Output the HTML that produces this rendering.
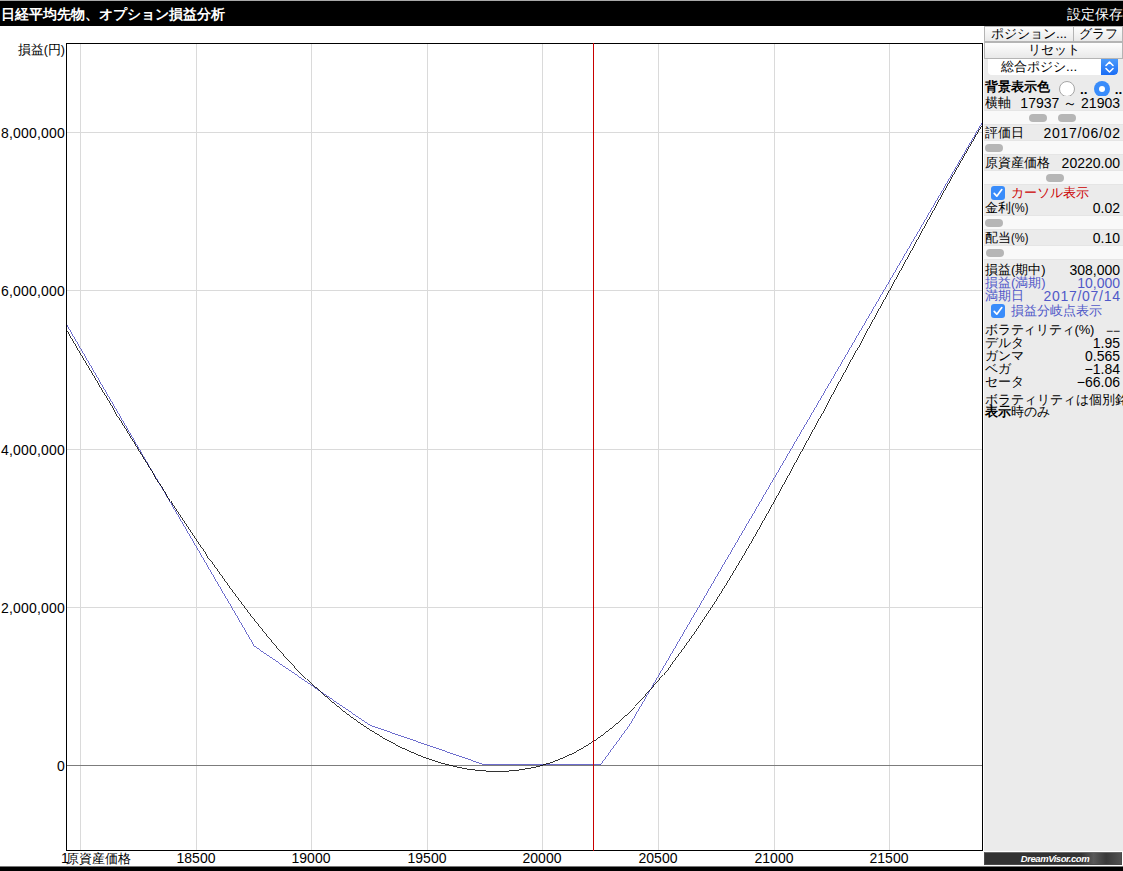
<!DOCTYPE html>
<html><head><meta charset="utf-8"><title>日経平均先物、オプション損益分析</title>
<style>
html,body{margin:0;padding:0;}
body{width:1123px;height:871px;overflow:hidden;background:#fff;position:relative;font-family:"Liberation Sans",sans-serif;color:#000;}
div,span{box-sizing:border-box;}
.abs{position:absolute;}
#topline{left:0;top:0;width:1123px;height:1px;background:#a9a9a9;}
#topbar{left:0;top:1px;width:1123px;height:25px;background:#000;}
#title{left:1px;top:6px;font-family:"Liberation Serif",serif;font-weight:bold;font-size:14px;line-height:18px;color:#fff;white-space:nowrap;}
#save{left:1067px;top:5px;font-size:14px;line-height:18px;color:#fff;white-space:nowrap;}
#botbar{left:0;top:867px;width:1123px;height:4px;background:#000;}
#plot{left:66px;top:43px;width:917px;height:808px;border:1px solid #000;}
.vg{position:absolute;top:44px;width:1px;height:806px;background:#dadada;}
.hg{position:absolute;left:67px;width:915px;height:1px;background:#dadada;}
#zero{left:67px;top:765px;width:915px;height:1px;background:#7c7c7c;}
#cursor{left:593px;top:43px;width:1px;height:808px;background:#c80000;}
.yl{position:absolute;right:1058px;font-size:14px;line-height:16px;white-space:nowrap;text-align:right;}
.xl{position:absolute;top:850px;width:60px;text-align:center;font-size:14px;line-height:16px;white-space:nowrap;}
#panel{left:984px;top:26px;width:139px;height:825px;background:#ebebeb;}
.row{position:absolute;left:984px;width:139px;font-size:14px;line-height:14px;white-space:nowrap;}
.row .l{position:absolute;left:1px;top:0;font-size:13px;}
.row .r{position:absolute;right:3px;top:0;}
.ds{letter-spacing:0.72px;margin-right:-0.72px;}
.band{position:absolute;left:984px;width:139px;background:#f9f9f9;border-top:1px solid #e5e5e5;border-bottom:1px solid #e5e5e5;}
.pill{position:absolute;width:18px;height:8px;border-radius:4px;background:#b6b6b6;}
.btn{position:absolute;height:16px;border:1px solid #b4b4b4;background:linear-gradient(#fdfdfd,#e9e9e9);font-size:13.3px;line-height:14px;text-align:center;white-space:nowrap;overflow:hidden;}
.blue{color:#5058c8;}
.cb{position:absolute;width:14px;height:14px;border-radius:3px;background:#398cfa;}
</style></head><body>

<div class="abs" id="topline"></div><div class="abs" id="topbar"></div>
<div class="abs" id="title">日経平均先物、オプション損益分析</div>
<div class="abs" id="save">設定保存</div>
<div class="abs" id="plot"></div>
<div class="vg" style="left:80px"></div>
<div class="vg" style="left:196px"></div>
<div class="vg" style="left:311px"></div>
<div class="vg" style="left:427px"></div>
<div class="vg" style="left:542px"></div>
<div class="vg" style="left:658px"></div>
<div class="vg" style="left:774px"></div>
<div class="vg" style="left:889px"></div>
<div class="hg" style="top:132px"></div>
<div class="hg" style="top:290px"></div>
<div class="hg" style="top:449px"></div>
<div class="hg" style="top:607px"></div>
<div class="abs" id="zero"></div>
<svg class="abs" style="left:0;top:0" width="1123" height="871" viewBox="0 0 1123 871" shape-rendering="crispEdges">
<defs><clipPath id="cp"><rect x="67" y="44" width="915" height="806"/></clipPath></defs>
<g clip-path="url(#cp)" fill="none" stroke-width="0.8">
<polyline stroke="#4848c0" points="66.5,324.5 254.3,646.1 369.8,725.2 483.6,764.5 600.7,764.5 629.8,724.8 982.5,122"/>
<polyline stroke="#000" points="66.5,329.8 70.5,336.7 74.5,343.6 78.5,350.4 82.5,357.2 86.5,363.9 90.5,370.6 94.5,377.3 98.5,384.0 102.5,390.7 106.5,397.3 110.5,403.9 114.5,410.5 118.5,417.1 122.5,423.7 126.5,430.2 130.5,436.8 134.5,443.3 138.5,449.8 142.5,456.3 146.5,462.7 150.5,469.1 154.5,475.5 158.5,481.9 162.5,488.2 166.5,494.5 170.5,500.7 174.5,506.9 178.5,513.0 182.5,519.1 186.5,525.1 190.5,531.1 194.5,537.0 198.5,542.9 202.5,548.7 206.5,554.5 210.5,560.2 214.5,565.9 218.5,571.6 222.5,577.2 226.5,582.7 230.5,588.2 234.5,593.7 238.5,599.0 242.5,604.4 246.5,609.7 250.5,614.9 254.5,620.0 258.5,625.1 262.5,630.1 266.5,635.0 270.5,639.9 274.5,644.6 278.5,649.3 282.5,653.9 286.5,658.4 290.5,662.7 294.5,667.0 298.5,671.2 302.5,675.3 306.5,679.3 310.5,683.2 314.5,687.0 318.5,690.7 322.5,694.3 326.5,697.8 330.5,701.2 334.5,704.6 338.5,707.8 342.5,711.0 346.5,714.0 350.5,717.0 354.5,719.9 358.5,722.8 362.5,725.5 366.5,728.2 370.5,730.7 374.5,733.2 378.5,735.6 382.5,738.0 386.5,740.2 390.5,742.4 394.5,744.5 398.5,746.5 402.5,748.5 406.5,750.3 410.5,752.1 414.5,753.8 418.5,755.5 422.5,757.0 426.5,758.5 430.5,759.9 434.5,761.2 438.5,762.5 442.5,763.6 446.5,764.7 450.5,765.7 454.5,766.7 458.5,767.5 462.5,768.3 466.5,769.0 470.5,769.6 474.5,770.1 478.5,770.5 482.5,770.9 486.5,771.1 490.5,771.3 494.5,771.4 498.5,771.4 502.5,771.3 506.5,771.1 510.5,770.8 514.5,770.4 518.5,769.9 522.5,769.3 526.5,768.7 530.5,767.9 534.5,767.0 538.5,766.0 542.5,764.9 546.5,763.7 550.5,762.4 554.5,760.9 558.5,759.4 562.5,757.7 566.5,755.9 570.5,754.0 574.5,752.0 578.5,749.8 582.5,747.5 586.5,745.1 590.5,742.6 594.5,740.0 598.5,737.2 602.5,734.3 606.5,731.2 610.5,728.1 614.5,724.8 618.5,721.4 622.5,717.8 626.5,714.1 630.5,710.3 634.5,706.4 638.5,702.4 642.5,698.2 646.5,693.9 650.5,689.4 654.5,684.9 658.5,680.2 662.5,675.4 666.5,670.5 670.5,665.5 674.5,660.3 678.5,655.1 682.5,649.7 686.5,644.2 690.5,638.6 694.5,632.9 698.5,627.1 702.5,621.2 706.5,615.2 710.5,609.1 714.5,602.9 718.5,596.6 722.5,590.2 726.5,583.8 730.5,577.2 734.5,570.6 738.5,563.9 742.5,557.1 746.5,550.3 750.5,543.4 754.5,536.4 758.5,529.4 762.5,522.4 766.5,515.2 770.5,508.1 774.5,500.9 778.5,493.6 782.5,486.4 786.5,479.1 790.5,471.8 794.5,464.4 798.5,457.1 802.5,449.7 806.5,442.4 810.5,435.0 814.5,427.6 818.5,420.3 822.5,412.9 826.5,405.5 830.5,398.1 834.5,390.8 838.5,383.4 842.5,376.1 846.5,368.8 850.5,361.4 854.5,354.1 858.5,346.8 862.5,339.5 866.5,332.2 870.5,325.0 874.5,317.7 878.5,310.4 882.5,303.2 886.5,295.9 890.5,288.6 894.5,281.4 898.5,274.1 902.5,266.8 906.5,259.6 910.5,252.3 914.5,245.0 918.5,237.7 922.5,230.4 926.5,223.2 930.5,215.9 934.5,208.7 938.5,201.4 942.5,194.2 946.5,187.0 950.5,179.9 954.5,172.8 958.5,165.7 962.5,158.7 966.5,151.7 970.5,144.8 974.5,138.0 978.5,131.3 982.5,124.7 982.5,124.7"/>
</g></svg>
<div class="abs" id="cursor"></div>
<div class="yl" style="top:42px;right:1058px;font-size:12.5px">損益(円)</div>
<div class="yl" style="top:125px;letter-spacing:0.2px">8,000,000</div>
<div class="yl" style="top:283px;letter-spacing:0.2px">6,000,000</div>
<div class="yl" style="top:442px;letter-spacing:0.2px">4,000,000</div>
<div class="yl" style="top:600px;letter-spacing:0.2px">2,000,000</div>
<div class="yl" style="top:758px;letter-spacing:0.2px">0</div>
<div class="abs" style="left:61px;top:850px;font-size:14px;line-height:16px;white-space:nowrap;"><span style="letter-spacing:-2.5px">1</span><span style="font-size:12.6px">原資産価格</span></div>
<div class="xl" style="left:166px">18500</div>
<div class="xl" style="left:281px">19000</div>
<div class="xl" style="left:397px">19500</div>
<div class="xl" style="left:512px">20000</div>
<div class="xl" style="left:628px">20500</div>
<div class="xl" style="left:744px">21000</div>
<div class="xl" style="left:859px">21500</div>
<div class="abs" id="panel"></div>
<div class="btn" style="left:984px;top:26px;width:90px;">ポジション...</div>
<div class="btn" style="left:1073px;top:26px;width:50px;">グラフ</div>
<div class="btn" style="left:984px;top:42px;width:139px;height:17px">リセット</div>
<div class="abs" style="left:988px;top:59px;width:130px;height:16px;background:#fff;border-radius:0 0 4px 4px;font-size:13.3px;line-height:15px;overflow:hidden;white-space:nowrap;"><span style="position:absolute;left:13px;top:0">総合ポジシ...</span><span style="position:absolute;right:0;top:0;width:17px;height:16px;background:linear-gradient(#4c9bfb,#1a6df5);border-radius:0 0 4px 0;"><svg width="17" height="16" viewBox="0 0 17 16" style="display:block"><path d="M5 6.5 L8.5 3 L12 6.5 M5 9.5 L8.5 13 L12 9.5" fill="none" stroke="#fff" stroke-width="1.6" stroke-linecap="round" stroke-linejoin="round"/></svg></span></div>
<div class="row" style="top:80px;font-weight:bold;font-size:13px"><span class="l">背景表示色</span></div>
<div class="abs" style="left:1059px;top:81px;width:16px;height:16px;border-radius:8px;background:#fff;border:1px solid #a6a6a6;"></div>
<div class="abs" style="left:1080px;top:83px;font-size:13.5px;line-height:14px;font-weight:bold">..</div>
<div class="abs" style="left:1094px;top:81px;width:16px;height:16px;border-radius:8px;background:#398cfa;"><div class="abs" style="left:5px;top:5px;width:6px;height:6px;border-radius:3px;background:#fff"></div></div>
<div class="abs" style="left:1114.7px;top:83px;font-size:13.5px;line-height:14px;font-weight:bold">..</div>
<div class="abs" style="left:984px;top:96px;width:139px;height:15px;background:#ebebeb"></div>
<div class="row " style="top:96px"><span class="l">横軸</span><span class="r">17937 ～ 21903</span></div>
<div class="band" style="top:110px;height:15px"><div class="pill" style="left:45px;top:3px"></div><div class="pill" style="left:74px;top:3px"></div></div>
<div class="row " style="top:126px"><span class="l">評価日</span><span class="r"><span class="ds">2017/06/02</span></span></div>
<div class="band" style="top:140px;height:15px"><div class="pill" style="left:1px;top:3px"></div></div>
<div class="row " style="top:156px"><span class="l">原資産価格</span><span class="r">20220.00</span></div>
<div class="band" style="top:170px;height:15px"><div class="pill" style="left:62px;top:3px"></div></div>
<div class="cb" style="left:991px;top:186px"><svg width="14" height="14" viewBox="0 0 14 14" style="display:block"><path d="M3.2 7.4 L5.8 10.2 L10.8 3.6" fill="none" stroke="#fff" stroke-width="1.7" stroke-linecap="round" stroke-linejoin="round"/></svg></div>
<div class="abs" style="left:1011px;top:186px;font-size:13px;line-height:14px;color:#cc0000;white-space:nowrap">カーソル表示</div>
<div class="row " style="top:201px"><span class="l">金利<span style="display:inline-block;transform:scaleX(.86);transform-origin:0 50%">(%)</span></span><span class="r">0.02</span></div>
<div class="band" style="top:215px;height:15px"><div class="pill" style="left:1px;top:3px"></div></div>
<div class="row " style="top:231px"><span class="l">配当<span style="display:inline-block;transform:scaleX(.86);transform-origin:0 50%">(%)</span></span><span class="r">0.10</span></div>
<div class="band" style="top:245px;height:15px"><div class="pill" style="left:2px;top:3px"></div></div>
<div class="row " style="top:263px"><span class="l">損益(期中)</span><span class="r">308,000</span></div>
<div class="row blue" style="top:276px"><span class="l">損益(満期)</span><span class="r">10,000</span></div>
<div class="row blue" style="top:289px"><span class="l">満期日</span><span class="r"><span class="ds">2017/07/14</span></span></div>
<div class="cb" style="left:991px;top:304px"><svg width="14" height="14" viewBox="0 0 14 14" style="display:block"><path d="M3.2 7.4 L5.8 10.2 L10.8 3.6" fill="none" stroke="#fff" stroke-width="1.7" stroke-linecap="round" stroke-linejoin="round"/></svg></div>
<div class="abs blue" style="left:1011px;top:304px;font-size:13px;line-height:14px;white-space:nowrap">損益分岐点表示</div>
<div class="row " style="top:323px"><span class="l"><span style="letter-spacing:-0.2px">ボラティリティ(%)</span></span><span class="r"><span style="font-size:12px">−−</span></span></div>
<div class="row " style="top:336px"><span class="l">デルタ</span><span class="r">1.95</span></div>
<div class="row " style="top:349px"><span class="l">ガンマ</span><span class="r">0.565</span></div>
<div class="row " style="top:362px"><span class="l">ベガ</span><span class="r">−1.84</span></div>
<div class="row " style="top:375px"><span class="l">セータ</span><span class="r">−66.06</span></div>
<div class="row" style="top:393px;overflow:hidden;height:14px"><span class="l">ボラティリティは個別銘柄</span></div>
<div class="row" style="top:405px"><span class="l"><b>表示</b>時のみ</span></div>
<div class="abs" style="left:984px;top:852px;width:138px;height:13px;background:#333;border:1px solid #4a4a4a;border-top-color:#6a6a6a;overflow:hidden"><div class="abs" style="left:96px;top:0;width:42px;height:13px;background:linear-gradient(90deg,#333,#5a5a5a 30%,#3a3a3a 60%,#555)"></div><div class="abs" style="left:2px;top:-1px;width:136px;text-align:center;font-size:9.5px;line-height:13px;font-weight:bold;font-style:italic;color:#fff;letter-spacing:-0.45px">DreamVisor.com</div></div>
<div class="abs" style="left:0;top:866px;width:1123px;height:1px;background:#777"></div><div class="abs" id="botbar"></div>
</body></html>
